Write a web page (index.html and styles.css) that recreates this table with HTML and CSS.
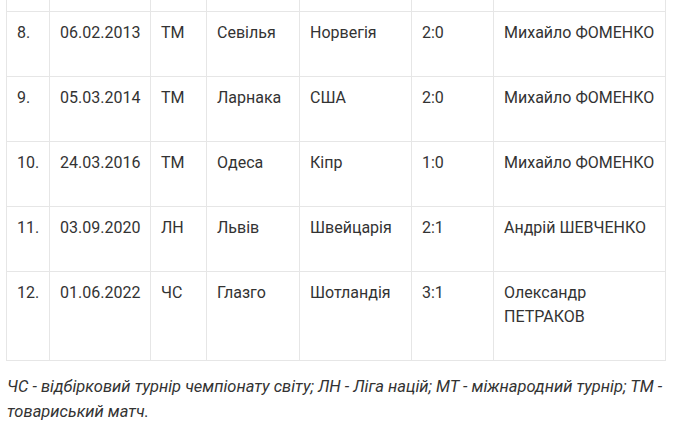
FILE: index.html
```html
<!DOCTYPE html>
<html lang="uk">
<head>
<meta charset="utf-8">
<link rel="stylesheet" href="styles.css">
</head>
<body>
<div class="content">
  <table class="matches">
    <colgroup>
      <col class="c-num"><col class="c-date"><col class="c-type"><col class="c-city"><col class="c-rival"><col class="c-score"><col class="c-coach">
    </colgroup>
    <tbody>
      <tr class="prev"><td></td><td></td><td></td><td></td><td></td><td></td><td></td></tr>
      <tr><td>8.</td><td>06.02.2013</td><td>ТМ</td><td>Севілья</td><td>Норвегія</td><td>2:0</td><td>Михайло ФОМЕНКО</td></tr>
      <tr><td>9.</td><td>05.03.2014</td><td>ТМ</td><td>Ларнака</td><td>США</td><td>2:0</td><td>Михайло ФОМЕНКО</td></tr>
      <tr><td>10.</td><td>24.03.2016</td><td>ТМ</td><td>Одеса</td><td>Кіпр</td><td>1:0</td><td>Михайло ФОМЕНКО</td></tr>
      <tr><td>11.</td><td>03.09.2020</td><td>ЛН</td><td>Львів</td><td>Швейцарія</td><td>2:1</td><td>Андрій ШЕВЧЕНКО</td></tr>
      <tr><td>12.</td><td>01.06.2022</td><td>ЧС</td><td>Глазго</td><td>Шотландія</td><td>3:1</td><td>Олександр ПЕТРАКОВ</td></tr>
    </tbody>
  </table>
  <p class="note"><em>ЧС - відбірковий турнір чемпіонату світу; ЛН - Ліга націй; МТ - міжнародний турнір; ТМ - товариський матч.</em></p>
</div>
</body>
</html>
```
FILE: styles.css
```css
html, body {
  margin: 0;
  padding: 0;
  background: #fff;
}
body {
  font-family: Roboto, "Noto Sans", sans-serif;
  font-size: 16px;
  color: #333;
}
.content {
  padding: 0 6px 0 6px;
  width: 680px;
  box-sizing: border-box;
}
.matches {
  border-collapse: collapse;
  table-layout: fixed;
  width: 659px;
}
.matches td {
  border: 1px solid #e6e6e6;
  padding: 9px 10px 31px;
  line-height: 24px;
  vertical-align: top;
}
.matches .prev td {
  border-top: 0;
  padding: 0;
  height: 11px;
}
.c-num { width: 43px; }
.c-date { width: 101px; }
.c-type { width: 56px; }
.c-city { width: 93px; }
.c-rival { width: 112px; }
.c-score { width: 82px; }
.c-coach { width: 172px; }
.note {
  margin: 13px 0 0;
  padding-left: 1px;
  font-size: 16.5px;
  line-height: 25px;
}
.note em {
  font-style: italic;
}
```
